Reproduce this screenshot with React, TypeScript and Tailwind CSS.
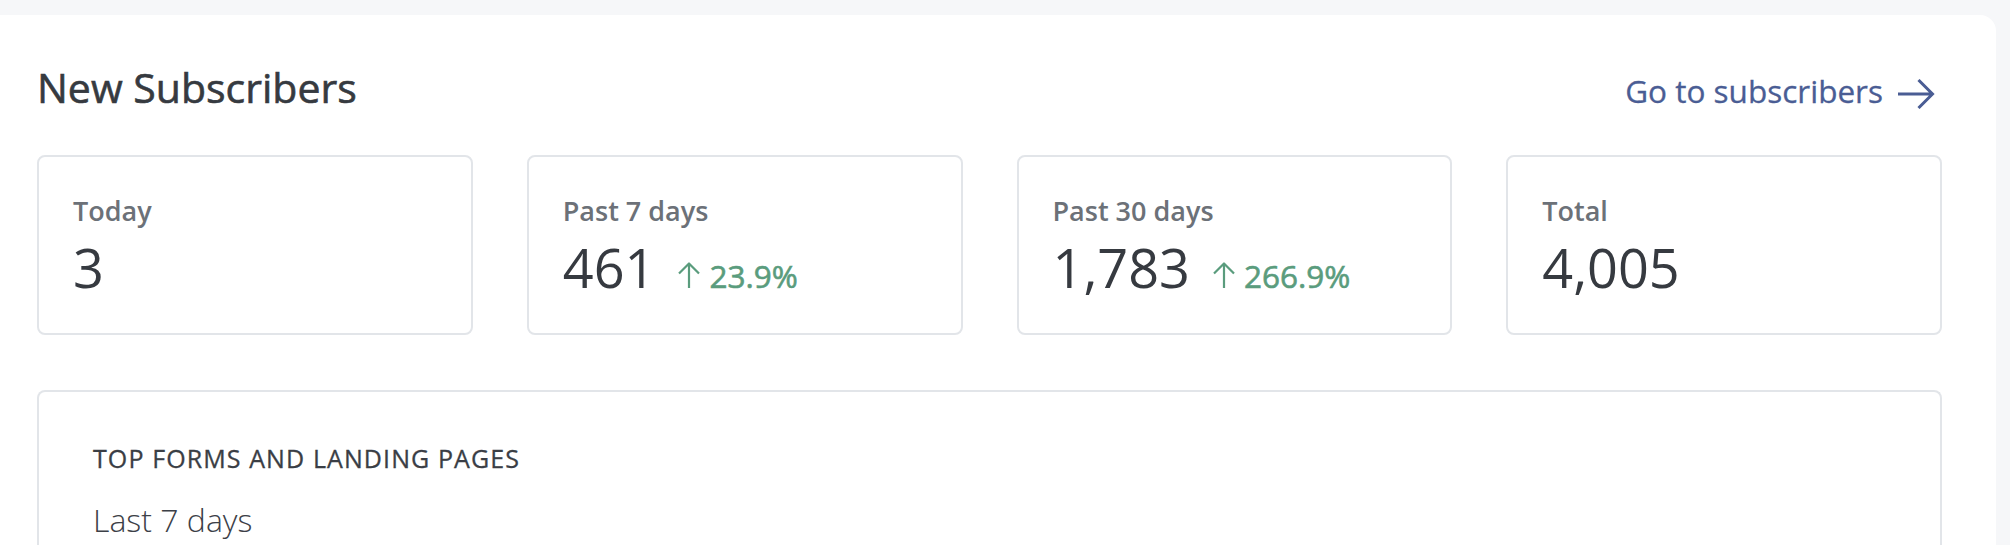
import React from 'react';

type Stat = {
  label: string;
  value: string;
  change?: string;
};

const stats: Stat[] = [
  { label: 'Today', value: '3' },
  { label: 'Past 7 days', value: '461', change: '23.9%' },
  { label: 'Past 30 days', value: '1,783', change: '266.9%' },
  { label: 'Total', value: '4,005' },
];

const UpArrow = () => (
  <svg width="22" height="27" viewBox="0 0 22 27" fill="none" className="ml-[23px] shrink-0">
    <path d="M11 27V2.5M1 12.5L11 2.5L21 12.5" stroke="#5a9c7d" strokeWidth="2.2" strokeLinejoin="round" />
  </svg>
);

const StatCard = ({ stat }: { stat: Stat }) => (
  <div className="h-[180px] rounded-[8px] border-2 border-[#e2e5e9] bg-white pl-[34px] pt-[36px]">
    <div className="text-[27px] leading-[36px] font-semibold text-[#6c7178]">{stat.label}</div>
    <div className="mt-[6px] flex items-baseline">
      <span className="text-[54px] leading-[64px] text-[#363a40]">{stat.value}</span>
      {stat.change && (
        <>
          <UpArrow />
          <span className="ml-[9px] text-[31.5px] leading-[40px] text-[#5a9c7d] [-webkit-text-stroke:0.6px]">
            {stat.change}
          </span>
        </>
      )}
    </div>
  </div>
);

export default function App() {
  return (
    <div className="min-h-screen bg-[#f6f7f9] pt-[15px] pr-[14px] font-['Open_Sans',sans-serif]">
      <div className="h-[530px] rounded-tr-[16px] bg-white pl-[37px] pr-[54px] pt-[42px]">
        {/* header */}
        <div className="flex h-[60px] items-baseline justify-between">
          <h2 className="text-[41px] leading-[60px] text-[#363a40] [-webkit-text-stroke:0.6px]">New Subscribers</h2>
          <a href="#" className="flex items-center pr-[7px] text-[31.5px] leading-[44px] text-[#4a5d94] [-webkit-text-stroke:0.3px]">
            Go to subscribers
            <svg width="37" height="30" viewBox="0 0 37 30" fill="none" className="ml-[15px] mt-[6px]">
              <path d="M0 15H34.5M20.5 1L34.5 15L20.5 29" stroke="#4a5d94" strokeWidth="3" />
            </svg>
          </a>
        </div>

        {/* stat cards */}
        <div className="mt-[38px] grid grid-cols-4 gap-[54px]">
          {stats.map((s) => (
            <StatCard key={s.label} stat={s} />
          ))}
        </div>

        {/* top forms */}
        <div className="mt-[55px] h-[200px] rounded-t-[8px] border-2 border-b-0 border-[#e2e5e9] pl-[54px] pt-[48px]">
          <div className="text-[25px] leading-[36px] tracking-[1.1px] text-[#3a3e45] [-webkit-text-stroke:0.3px]">
            TOP FORMS AND LANDING PAGES
          </div>
          <div className="mt-[22px] text-[32px] leading-[44px] font-light text-[#3c4047]">Last 7 days</div>
        </div>
      </div>
    </div>
  );
}
